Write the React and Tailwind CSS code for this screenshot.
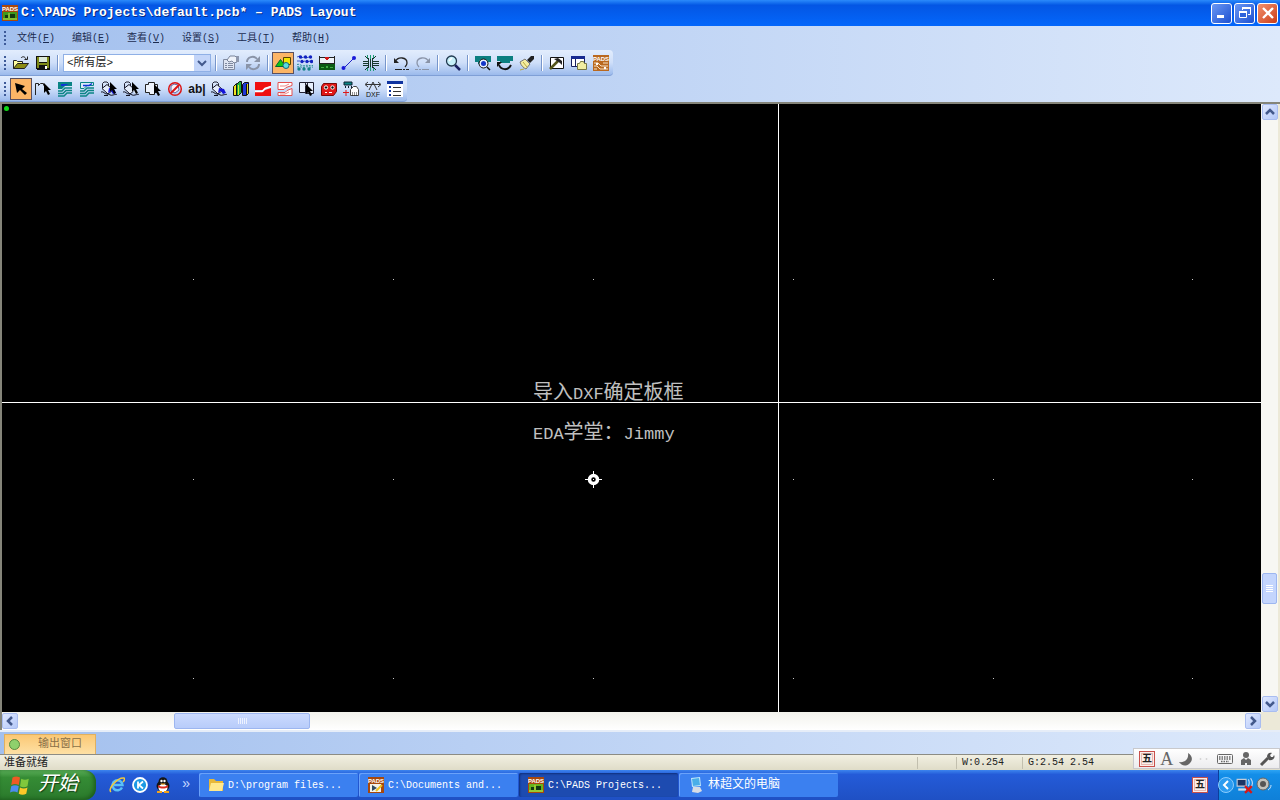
import React, { useState } from 'react';

const MENUS = [
  { label: '文件', key: 'F' },
  { label: '编辑', key: 'E' },
  { label: '查看', key: 'V' },
  { label: '设置', key: 'S' },
  { label: '工具', key: 'T' },
  { label: '帮助', key: 'H' },
];

const GRID_X = [191, 391, 591, 791, 991, 1190];
const GRID_Y = [175, 375, 574];

const Svg = ({ children, className = 'w-4 h-4', box = '0 0 16 16', crisp = false }) => (
  <svg viewBox={box} className={className} fill="none" shapeRendering={crisp ? 'crispEdges' : 'auto'} aria-hidden="true">
    {children}
  </svg>
);

const Pointer = ({ x, y }) => (
  <path d="M0 0V10L2 8L4 12L6 11L4 7H7Z" fill="#000" transform={`translate(${x} ${y})`} />
);

const Bucket = ({ fill }) => (
  <>
    <path d="M1.500 7V2.500L3 1h3l1.500 1.500V7" stroke="#223" />
    <path d="M1 7.500L6 3.500L12 9L7 13Z" fill="#e6eefc" stroke="#112" />
    <path d="M7 12l1-5 5 1 2 4-3 1-2-3z" fill={fill} />
    <path d="M0 11c3-1 3 2 6 2s3 2 6 1 3 0 4-1" stroke="#112" />
    <path d="M3 14.500h4" stroke="#112" />
  </>
);

const PadsLogo = ({ board = '#3f9a1c', className = 'w-4 h-4' }) => (
  <Svg className={className}>
    <rect width="16" height="16" fill="#a8480c" />
    <text x="8" y="6" fontSize="6" fontWeight="bold" textAnchor="middle" fill="#fff" fontFamily="Liberation Sans, sans-serif">PADS</text>
    <rect x="1" y="7" width="14" height="8" fill={board} />
    <path d="M3 10h3v3H3zM8 9h5v4H8z" fill="#123a10" />
    <path d="M1 14h14M7 8v5" stroke="#c8e04a" />
  </Svg>
);

const icons = {
  open: (
    <Svg>
      <path d="M.5 13.500V5.500h3l1 1h5v3" fill="#ffffa0" stroke="#222" />
      <path d="M.5 13.500L4.500 8.500H15.500L11.500 13.500Z" fill="#8c8c14" stroke="#222" />
      <path d="M8 3c1.500-2 4-1.500 5 1M14.500 1.500v3h-3" stroke="#222" />
    </Svg>
  ),
  save: (
    <Svg crisp>
      <path d="M1 1h14v14H2l-1-1z" fill="#111" />
      <path d="M2 2h2v6h8V2h2v11H2z" fill="#7f8a18" />
      <path d="M4 2h8v5H4z" fill="#dce8d8" />
      <path d="M4 10h8v4H4z" fill="#111" />
      <path d="M10 11h2v3h-2z" fill="#fff" />
    </Svg>
  ),
  properties: (
    <Svg>
      <path d="M.5 4.500h11v10H.5z" fill="#dfe5f2" stroke="#808aa0" />
      <path d="M2 8.500h2M5 8.500h5M2 10.500h2M5 10.500h5M2 12.500h2M5 12.500h5" stroke="#808aa0" />
      <path d="M4 5l3-4h5l2 2v4l-3 1-2-2-3 1z" fill="#eef2fa" stroke="#7b859b" />
      <path d="M13 1h3v6h-3z" fill="#8e98ae" />
    </Svg>
  ),
  refresh: (
    <Svg>
      <path d="M2 7c0-5 7-7 10-3M14 9c0 5-7 7-10 3" stroke="#8a94a8" strokeWidth="2" />
      <path d="M15 1v6H9zM1 15V9h6z" fill="#8a94a8" />
    </Svg>
  ),
  shapes: (
    <Svg>
      <path d="M0.500 11.500L5.500 4.500l5 7z" fill="#10c810" stroke="#063" />
      <path d="M8.500 2.500h7v7h-7z" fill="#f4e400" stroke="#554400" />
      <circle cx="11" cy="10.500" r="3" fill="#58dce0" stroke="#176b78" />
    </Svg>
  ),
  nets: (
    <Svg>
      <path d="M0 2l3-1M4 3l3-1M9 3l3-1M0 6l3 0M5 7l3-1M10 7l3-1" stroke="#3c55c8" />
      {[[3.5, 2], [8.5, 2], [13.5, 2], [5, 6.5], [10, 6.5], [14.500, 6.5]].map(([x, y]) => (
        <circle key={`${x}-${y}`} cx={x} cy={y} r="1.700" fill="#1120c0" />
      ))}
      <path d="M0 9.500c3-1 4 2 8 1s5 1 8 0M0 12c3-1 5 1 8 0s5 1 8 0" stroke="#2b8f95" strokeDasharray="2 1" />
      <circle cx="2" cy="14" r="1.700" fill="#158088" />
      <circle cx="7" cy="14" r="1.700" fill="#158088" />
      <circle cx="12" cy="14" r="1.700" fill="#158088" />
    </Svg>
  ),
  board: (
    <Svg crisp>
      <path d="M0 1h1v14H0zM15 1h1v14h-1zM1 2h14v7H1z" fill="#222" />
      <path d="M1 3h14v5H1z" fill="#eef2f8" />
      <path d="M6 2h4v2H9v1H7V4H6z" fill="#d01818" />
      <path d="M0 9h16v6H0z" fill="#0c5a14" />
      <path d="M2 12h3v1H2zM7 11h2v2H7zM11 12h3v1h-3z" fill="#3fae42" />
    </Svg>
  ),
  route: (
    <Svg>
      <path d="M3 13L13 3" stroke="#2222c8" />
      <circle cx="2.500" cy="13" r="2" fill="#1818d8" />
      <circle cx="13" cy="3" r="2" fill="#1818d8" />
    </Svg>
  ),
  fanout: (
    <Svg>
      <path d="M7.500 4v8M5 4L2 1M5 6.500H0M5 8.500H0M5 10.500H0M5 12L2 15M10 4l3-3M10 6.500h6M10 8.500h6M10 10.500h6M10 12l3 3" stroke="#17372c" />
      <path d="M5 3h1v10H5zM9 3h1v10H9z" fill="#17372c" />
      <path d="M7.500 0v4M7.500 12v4" stroke="#1d9c74" />
      <path d="M4.500 0v3M10.500 0v3M4.500 13v3M10.500 13v3" stroke="#1d9c74" />
    </Svg>
  ),
  undo: (
    <Svg>
      <path d="M2 7c3-6 12-5 12 1 0 2-1 3-2 4" stroke="#222" strokeWidth="1.300" />
      <path d="M1 3v5h5z" fill="#222" />
      <path d="M2 14.500h7M10 14.500h2M13 14.500h3" stroke="#222" />
    </Svg>
  ),
  redo: (
    <Svg>
      <path d="M14 7C11 1 2 2 2 8c0 2 1 3 2 4" stroke="#8a94a8" strokeWidth="1.300" />
      <path d="M15 3v5h-5z" fill="#8a94a8" />
      <path d="M0 14.500h3M4 14.500h2M7 14.500h7" stroke="#8a94a8" />
    </Svg>
  ),
  zoom: (
    <Svg>
      <path d="M10 10l5 5" stroke="#182060" strokeWidth="2.500" />
      <circle cx="6.500" cy="6" r="5" fill="#c6f0fa" stroke="#223a50" strokeWidth="1.300" />
      <path d="M4 6l3-3" stroke="#fff" strokeWidth="1.500" />
    </Svg>
  ),
  boardZoom: (
    <Svg>
      <path d="M0 1h16v6h-3v2H3V7H0z" fill="#0b7f80" />
      <circle cx="8.500" cy="8.500" r="4.500" fill="#e8f0ff" stroke="#111" />
      <circle cx="8.500" cy="8.500" r="2.500" fill="#1436c8" />
      <path d="M12 12l3 3" stroke="#111" strokeWidth="1.500" />
    </Svg>
  ),
  boardRedraw: (
    <Svg>
      <path d="M0 1h16v5h-3v2H3V6H0z" fill="#0b7f80" />
      <path d="M2 10c2 5 9 6 12 0" stroke="#111" strokeWidth="2" />
      <path d="M0 12V7h5z" fill="#111" />
    </Svg>
  ),
  brush: (
    <Svg>
      <path d="M1 7l5-3 5 5-4 5c-2-1-5-3-6-7z" fill="#f4eda0" stroke="#777" />
      <path d="M8 5l4-4h3v3l-4 4z" fill="#222" />
      <path d="M4 7l4 5M1 15l4-1" stroke="#b8a840" />
    </Svg>
  ),
  tools: (
    <Svg>
      <path d="M1.500 2.500h13v11h-13z" fill="#fff" stroke="#111" />
      <path d="M1 14L9 6" stroke="#55551a" strokeWidth="2.500" />
      <path d="M5 4l4-1 4 3v4l-2-2-3-2z" fill="#222" />
    </Svg>
  ),
  explorer: (
    <Svg>
      <path d="M.5 1.500h13v10H.5z" fill="#fff" stroke="#182060" />
      <path d="M0 1h14v3H0z" fill="#182a90" />
      <path d="M4.500 4v8" stroke="#182060" />
      <path d="M6.500 8.500h2l1-2h3l1 2h2v6h-9z" fill="#f1eda2" stroke="#777744" />
    </Svg>
  ),
  router: (
    <Svg>
      <rect width="16" height="16" fill="#b9681f" />
      <text x="8" y="6" fontSize="6" fontWeight="bold" textAnchor="middle" fill="#fff" fontFamily="Liberation Sans, sans-serif">PADS</text>
      <path d="M1 8h4l3 3h7M1 11h3l3 3h8M10 8h5M1 14h3" stroke="#f5e2c8" />
      <circle cx="4" cy="9" r="1.200" fill="#fff" />
      <circle cx="12" cy="13" r="1.200" fill="#fff" />
    </Svg>
  ),
  select: (
    <Svg>
      <path d="M2 2L4 12L7 9L12 14L14 12L9 8L12 5Z" fill="#000" />
    </Svg>
  ),
  draft: (
    <Svg>
      <path d="M.5 14V2.500h3v2l2-2h3v2" stroke="#222" />
      <Pointer x={9} y={2} />
    </Svg>
  ),
  copper: (
    <Svg>
      <path d="M1 1h14v4H8L5 8H1z" fill="#0b8485" />
      <path d="M4 3h8L7 5H4z" fill="#1234d8" />
      <path d="M1 10h4l3-3h7M1 12.500h5l3-3h6M1 15h6l3-3h5" stroke="#0b8485" strokeWidth="1.500" />
    </Svg>
  ),
  copperCut: (
    <Svg>
      <path d="M1.500 1.500h13v3H8L5 7.500H1.500z" fill="#dbeaf8" stroke="#0b8485" />
      <path d="M4 4.500h6l3-2" stroke="#1234d8" strokeWidth="1.500" />
      <path d="M1 10h4l3-3h7M1 12.500h5l3-3h6M1 15h6l3-3h5" stroke="#0b8485" strokeWidth="1.500" />
    </Svg>
  ),
  pour: <Svg><Bucket fill="#1414d8" /><Pointer x={9} y={1} /></Svg>,
  pourCut: <Svg><Bucket fill="#dfe8f8" /><Pointer x={9} y={1} /></Svg>,
  outline: (
    <Svg>
      <path d="M.5 3.500h3v-2h6v2h3v8h-3v2h-5v-2h-4z" fill="#eef3fc" stroke="#222" />
      <Pointer x={9} y={3} />
    </Svg>
  ),
  keepout: (
    <Svg>
      <path d="M4 5l3-2 4 1 1 5-4 3-4-2z" fill="#f6f2f8" stroke="#6666a0" />
      <circle cx="8" cy="8" r="6.300" stroke="#dc1515" strokeWidth="1.500" />
      <path d="M4 12l8-8" stroke="#dc1515" strokeWidth="2" />
    </Svg>
  ),
  text: <span className="font-['Liberation_Sans'] text-xs font-bold leading-4 text-[#111]">ab|</span>,
  flood: <Svg><Bucket fill="#1414d8" /></Svg>,
  library: (
    <Svg>
      <path d="M.5 5.500l3-3v12h-3z" fill="#f0e020" stroke="#111" />
      <path d="M3.500 3.500l3-3h2v11l-3 3h-2z" fill="#1bb03a" stroke="#111" />
      <path d="M5.500 4v10" stroke="#d8e830" />
      <path d="M9.500 3.500l2-2h4v11l-2 2h-4z" fill="#2038d8" stroke="#111" />
      <path d="M13 3h1v11h-1z" fill="#111" />
      <path d="M14.500 3v10" stroke="#e8d820" />
    </Svg>
  ),
  plane: (
    <Svg>
      <path d="M0 1h16v4L10 7l-2 2H0z" fill="#f01010" />
      <path d="M0 11h8l2-2 6-2v8H0z" fill="#f01010" />
      <path d="M0 10.500h7l3-3 6-2" stroke="#fff" strokeWidth="1.500" />
    </Svg>
  ),
  planeCut: (
    <Svg>
      <path d="M1 1.500h14v3L9 6.500l-2 2H1zM1 14.500v-3h7l2-2 5-2v7z" fill="#fff" stroke="#e25050" />
      <path d="M3 5h5l4-2M3 13h5l4-2" stroke="#ee8888" />
    </Svg>
  ),
  duplicate: (
    <Svg>
      <path d="M.5 1.500h8v10h-8zM6.500 4.500v-3h8v11h-8z" fill="#e7effc" stroke="#223" />
      <Pointer x={7} y={3} />
    </Svg>
  ),
  component: (
    <Svg>
      <path d="M2.500 2.500h13v8l-3 4h-12v-9z" fill="#e01818" stroke="#7b0808" />
      <circle cx="5" cy="6.500" r="1.700" fill="#111" stroke="#fff" />
      <circle cx="11.500" cy="6.500" r="1.700" fill="#111" stroke="#fff" />
      <path d="M4 11.500h2M8 11.500h3" stroke="#fff" />
    </Svg>
  ),
  jumper: (
    <Svg>
      <path d="M1 1h8v3H1z" fill="#0b8485" stroke="#123" />
      <path d="M2 6h1M5 6h1M8 6h1" stroke="#123" strokeWidth="2" />
      <path d="M7.500 14.500v-6l3-3h3l2 3v6z" fill="#fff" stroke="#444" />
      <path d="M9 12h5M9 14h5" stroke="#222" strokeDasharray="1 1" />
      <path d="M0 11.500h6M3 9v6" stroke="#dc1818" />
    </Svg>
  ),
  dxf: (
    <Svg>
      <path d="M1 3.500h14M4 9l4-8 4 8M3 1L0 3.500 3 6M13 1l3 2.500L13 6" stroke="#333" />
      <text x="8" y="15.500" fontSize="7" textAnchor="middle" fill="#111" fontFamily="Liberation Sans, sans-serif">DXF</text>
    </Svg>
  ),
  list: (
    <Svg crisp>
      <path d="M0 0h16v16H0z" fill="#fff" />
      <path d="M0 0h16v3H0z" fill="#1034a0" />
      <path d="M2 5h2v2H2zM2 9h2v2H2zM2 13h2v2H2z" fill="#1034a0" />
      <path d="M6 6h8v1H6zM6 10h8v1H6zM6 14h8v1H6z" fill="#333" />
    </Svg>
  ),
};

const Tool = ({ name, title, active }) => (
  <button
    type="button"
    aria-label={title}
    className={`flex h-[22px] w-[22px] shrink-0 items-center justify-center ${active ? 'border border-[#5a5060] bg-[#fcb566]' : 'hover:bg-[#ffe0a8]'}`}
  >
    {icons[name]}
  </button>
);

const Sep = () => (
  <span className="flex w-2 shrink-0 justify-center">
    <span className="h-4 w-px bg-[#7796cb]" />
    <span className="h-4 w-px bg-white" />
  </span>
);

const Grip = () => (
  <span className="flex w-[10px] shrink-0 flex-col items-center gap-[2px]">
    {[0, 1, 2, 3].map(i => <span key={i} className="h-[2px] w-[2px] bg-[#3d5a98]" />)}
  </span>
);

const ToolStrip = ({ children }) => (
  <div className="flex h-[26px] w-fit items-center rounded-r border-b border-[#7f9fd6] bg-linear-to-b from-[#e2edfd] via-[#cfdff9] to-[#9bbaec] pr-px">
    <Grip />
    {children}
  </div>
);

const ARROWS = { up: 'M4 10l4-4 4 4', down: 'M4 6l4 4 4-4', left: 'M10 4L6 8l4 4', right: 'M6 4l4 4-4 4' };

const ScrollButton = ({ dir }) => (
  <button type="button" aria-label={`Scroll ${dir}`} className="flex h-4 w-4 shrink-0 items-center justify-center rounded-xs border border-[#a9bdf0] bg-linear-to-br from-[#dfe8ff] to-[#b4c8f8]">
    <Svg className="w-4 h-4 shrink-0"><path d={ARROWS[dir]} stroke="#43598c" strokeWidth="2.500" /></Svg>
  </button>
);

const WindowButton = ({ title, className, children }) => (
  <button type="button" aria-label={title} className={`flex h-[21px] w-[21px] items-center justify-center rounded-[3px] border border-white ${className}`}>
    <Svg>{children}</Svg>
  </button>
);

const TaskButton = ({ icon, active, wide, children }) => (
  <button
    type="button"
    className={`flex h-6 w-[159px] min-w-0 items-center gap-1 rounded-xs pl-[9px] text-left text-white ${wide ? 'text-xs' : 'text-[10px]'} ${active ? 'bg-[#1d4bb0] shadow-[inset_1px_1px_2px_#10307c]' : 'bg-[#3b80f0] shadow-[inset_1px_1px_0_#6aa2fa]'}`}
  >
    {icon}
    <span className="truncate">{children}</span>
  </button>
);

const FiveStroke = ({ className = '' }) => (
  <span className={`flex h-4 w-4 items-center justify-center border border-[#c8504c] bg-[#fbeeea] ${className}`}>
    <span className="flex h-3 w-3 items-center justify-center border border-[#e6b8b2] pt-[2px] text-[10px] font-bold leading-none text-[#222]">五</span>
  </span>
);

const TitleBar = () => (
  <header className="flex h-[26px] items-center gap-[3px] bg-linear-to-b from-[#2b8afb] via-[#0456e4] via-20% to-[#0467fb] pl-[2px] pr-[2px]">
    <PadsLogo />
    <h1 className="flex-1 truncate text-[13px] font-bold text-white [text-shadow:1px_1px_0_#0a2a80]">C:\PADS Projects\default.pcb* – PADS Layout</h1>
    <div className="flex gap-[2px]">
      <WindowButton title="最小化" className="bg-linear-to-br from-[#6a97f4] to-[#1d4fd0]">
        <path d="M3 10h7v3H3z" fill="#fff" />
      </WindowButton>
      <WindowButton title="还原" className="bg-linear-to-br from-[#6a97f4] to-[#1d4fd0]">
        <path d="M5.500 5V2.500h8v7H11" stroke="#fff" />
        <path d="M5 3h9" stroke="#fff" strokeWidth="2" />
        <path d="M2.500 6.500h7v6h-7z" fill="#2d62dc" stroke="#fff" />
        <path d="M2 7h8" stroke="#fff" strokeWidth="2" />
      </WindowButton>
      <WindowButton title="关闭" className="bg-linear-to-br from-[#f0906c] to-[#cc3a10]">
        <path d="M3 3l10 10M13 3L3 13" stroke="#fff" strokeWidth="2.300" />
      </WindowButton>
    </div>
  </header>
);

const MenuBar = () => (
  <nav className="flex h-6 items-center">
    <Grip />
    <div className="flex gap-[3px]">
      {MENUS.map(m => (
        <button key={m.key} type="button" className="w-[52px] text-[10px] text-[#1c2c50]">
          {m.label}(<u>{m.key}</u>)
        </button>
      ))}
    </div>
  </nav>
);

const Toolbars = () => {
  const [layer, setLayer] = useState('all');
  return (
    <div className="flex flex-col">
      <ToolStrip>
        <Tool name="open" title="打开" />
        <Tool name="save" title="保存" />
        <Sep />
        <div className="relative flex w-[150px] items-center px-px">
          <select
            aria-label="层"
            value={layer}
            onChange={e => setLayer(e.target.value)}
            className="h-[18px] w-full appearance-none border border-[#8fb0e6] bg-white pl-[3px] text-[11px] leading-4 text-[#222]"
          >
            <option value="all">&lt;所有层&gt;</option>
          </select>
          <span className="pointer-events-none absolute right-[2px] flex h-4 w-4 items-center justify-center bg-[#c3d5f9]">
            <Svg><path d={ARROWS.down} stroke="#43598c" strokeWidth="2" /></Svg>
          </span>
        </div>
        <Sep />
        <Tool name="properties" title="特性" />
        <Tool name="refresh" title="循环" />
        <Sep />
        <Tool name="shapes" title="绘图工具栏" active />
        <Tool name="nets" title="设计工具栏" />
        <Tool name="board" title="尺寸标注" />
        <Tool name="route" title="布线" />
        <Tool name="fanout" title="扇出" />
        <Sep />
        <Tool name="undo" title="撤销" />
        <Tool name="redo" title="重做" />
        <Sep />
        <Tool name="zoom" title="缩放" />
        <Sep />
        <Tool name="boardZoom" title="板" />
        <Tool name="boardRedraw" title="前一视图" />
        <Tool name="brush" title="重画" />
        <Sep />
        <Tool name="tools" title="输出窗口" />
        <Tool name="explorer" title="项目浏览器" />
        <Tool name="router" title="布线器" />
      </ToolStrip>
      <ToolStrip>
        <Tool name="select" title="选择" active />
        <Tool name="draft" title="绘图" />
        <Tool name="copper" title="铜箔" />
        <Tool name="copperCut" title="铜箔挖空" />
        <Tool name="pour" title="覆铜" />
        <Tool name="pourCut" title="覆铜挖空" />
        <Tool name="outline" title="板框" />
        <Tool name="keepout" title="禁止区" />
        <Tool name="text" title="文本" />
        <Tool name="flood" title="灌注" />
        <Tool name="library" title="库" />
        <Tool name="plane" title="平面区域" />
        <Tool name="planeCut" title="平面挖空" />
        <Tool name="duplicate" title="复制" />
        <Tool name="component" title="元件" />
        <Tool name="jumper" title="标签" />
        <Tool name="dxf" title="导入 DXF" />
        <Tool name="list" title="选项" />
      </ToolStrip>
    </div>
  );
};

const BoardCanvas = () => (
  <main className="relative min-w-0 flex-1 overflow-hidden bg-black">
    <span className="absolute left-[2px] top-[2px] h-[5px] w-[5px] rounded-full bg-[#10d818]" />
    {GRID_Y.map(y => GRID_X.map(x => (
      <span key={`${x}-${y}`} className="absolute h-px w-px bg-[#c8c8c8]" style={{ left: x, top: y }} />
    )))}
    {/* cursor cross */}
    <span className="absolute inset-y-0 left-[776px] w-px bg-white" />
    <span className="absolute inset-x-0 top-[298px] h-px bg-white" />
    {/* board origin */}
    <span className="absolute left-[583px] top-[367px]">
      <Svg className="h-[17px] w-[17px]" box="0 0 17 17">
        <path d="M8.500 0v17M0 8.500h17" stroke="#fff" />
        <circle cx="8.500" cy="8.500" r="4" fill="#000" stroke="#fff" strokeWidth="3.500" />
        <path d="M8 8h1v1H8z" fill="#fff" />
      </Svg>
    </span>
    <p className="absolute left-[531px] top-[278px] whitespace-nowrap text-xl leading-6 text-[#c0c0c0]">
      导入<span className="text-[17px]">DXF</span>确定板框
    </p>
    <p className="absolute left-[531px] top-[318px] whitespace-nowrap text-xl leading-6 text-[#c0c0c0]">
      <span className="text-[17px]">EDA</span>学堂：<span className="text-[17px]">Jimmy</span>
    </p>
  </main>
);

const Workspace = () => (
  <section className="flex min-h-0 flex-1 flex-col border-l-2 border-t-2 border-[#85857a] bg-[#ece9d8] pr-[2px]">
    <div className="flex min-h-0 flex-1">
      <BoardCanvas />
      <div className="flex w-[17px] flex-col items-center bg-[#f7f7f3]">
        <ScrollButton dir="up" />
        <div className="flex-[453]" />
        <div className="flex h-[31px] w-[15px] flex-col items-center justify-center gap-px rounded-xs border border-[#9db6f0] bg-[#c4d5fd]">
          {[0, 1, 2, 3].map(i => <span key={i} className="h-px w-[7px] bg-white" />)}
        </div>
        <div className="flex-[92]" />
        <ScrollButton dir="down" />
      </div>
    </div>
    <div className="flex h-[18px]">
      <div className="flex flex-1 items-center bg-linear-to-b from-[#f2f2ec] to-white">
        <ScrollButton dir="left" />
        <div className="flex-[156]" />
        <div className="flex h-4 w-[136px] items-center justify-center gap-px rounded-xs border border-[#9db6f0] bg-linear-to-b from-[#cbdafe] to-[#b8ccfa]">
          {[0, 1, 2, 3, 4].map(i => <span key={i} className="h-[6px] w-px bg-[#edf2ff]" />)}
        </div>
        <div className="flex-[934]" />
        <ScrollButton dir="right" />
      </div>
      <div className="w-[17px] bg-[#ece9d8]" />
    </div>
  </section>
);

const StatusBar = () => (
  <footer className="flex h-4 items-center border-t border-[#8c8c84] bg-linear-to-b from-[#f2f0e2] to-[#dfdcc8] text-[10px] text-[#222]">
    <span className="flex-1 pl-1 text-[11px] leading-4">准备就绪</span>
    <span className="h-3 w-[39px] border-l border-[#c2bfae]" />
    <span className="w-[66px] border-l border-[#c2bfae] pl-[5px] leading-3">W:0.254</span>
    <span className="w-[258px] border-l border-[#c2bfae] pl-[5px] leading-3">G:2.54 2.54</span>
  </footer>
);

const ImeBar = () => (
  <div className="absolute bottom-[31px] right-0 flex h-[21px] w-[147px] items-center justify-between border border-[#c9c9cc] bg-linear-to-b from-white to-[#ececee] pl-[5px] pr-1 text-[#666]">
    <FiveStroke />
    <span className="font-['Liberation_Serif'] text-lg leading-none">A</span>
    <Svg><path d="M10 2c5 3 5 8 1 11s-8 1-10-2c6 1 10-3 9-9z" fill="#666" /></Svg>
    <Svg className="h-4 w-3"><path d="M1 8h2M9 8h2" stroke="#ccc" strokeWidth="2" /></Svg>
    <Svg>
      <rect x="0.500" y="3.500" width="15" height="9" rx="1" stroke="#666" />
      <path d="M2 6h12M2 8h12M4 10.500h8" stroke="#666" strokeWidth="1.500" strokeDasharray="1.500 1" />
    </Svg>
    <Svg>
      <circle cx="8" cy="4" r="3" fill="#666" />
      <path d="M3 14V9l3-2 2 2 2-2 3 2v5h-4v-2H7v2z" fill="#666" />
    </Svg>
    <Svg>
      <path d="M2 14l7-7" stroke="#555" strokeWidth="3" />
      <path d="M8 6c0-3 2-5 5-4l-2 2 1 2h2l1-2c2 3-2 6-5 5z" fill="#555" />
    </Svg>
  </div>
);

const Taskbar = () => (
  <footer className="flex h-[30px] items-center bg-linear-to-b from-[#3d84ee] via-[#245bd8] via-15% to-[#1f50c4]">
    <button type="button" className="flex h-full w-24 items-center gap-2 rounded-r-xl bg-linear-to-b from-[#5cb05a] via-[#358c35] via-25% to-[#2b7a2c] pl-[10px] text-xl italic leading-none text-white shadow-[inset_-2px_-1px_4px_#1c5c1c] [text-shadow:1px_1px_1px_#153f15]">
      <Svg className="h-5 w-5">
        <path d="M2 2c2-1 4-1 6 0L7 8c-2-1-4-1-6 0z" fill="#ee5a24" />
        <path d="M9 3c2 1 4 1 6 0l-1 6c-2 1-4 1-6 0z" fill="#80c83c" />
        <path d="M1 9c2-1 4-1 6 0l-1 5c-2-1-4-1-6 0z" fill="#4d8cf0" />
        <path d="M8 10c2 1 4 1 6 0l-1 5c-2 1-4 1-6 0z" fill="#fcc828" />
      </Svg>
      开始
    </button>
    <div className="flex w-[103px] items-center gap-[7px] pl-[13px]">
      <Svg>
        <path d="M13 10.500A5 5 0 1 1 13.500 8H5" stroke="#5ac0f8" strokeWidth="2.500" />
        <path d="M2 15C-2 12 9 0 15 1c1 1 0 3-1 4" stroke="#f2c83c" strokeWidth="1.500" />
      </Svg>
      <Svg>
        <circle cx="8" cy="8" r="7" fill="#1c9ae4" stroke="#fff" strokeWidth="1.800" />
        <path d="M6 4.500v7M11 4.500L7 8l4 3.500" stroke="#fff" strokeWidth="1.800" />
      </Svg>
      <Svg>
        <ellipse cx="8" cy="9" rx="6.500" ry="5.500" fill="#151515" />
        <ellipse cx="8" cy="5" rx="4.500" ry="4.800" fill="#151515" />
        <ellipse cx="8" cy="11" rx="4.500" ry="4" fill="#fff" />
        <path d="M3 8c3 2 7 2 10 0v2c-3 2-7 2-10 0z" fill="#dd2a1c" />
        <circle cx="6.500" cy="4" r="1.200" fill="#fff" />
        <circle cx="9.500" cy="4" r="1.200" fill="#fff" />
        <path d="M5 6.500h6l-3 1.500zM2 14h5v2H2zM9 14h5v2H9z" fill="#f4a41c" />
      </Svg>
      <span className="self-start pl-1 text-sm leading-none text-[#c4d8ff]">»</span>
    </div>
    <div className="flex min-w-0 flex-1 gap-px">
      <TaskButton
        icon={
          <Svg className="h-4 w-4 shrink-0">
            <path d="M1 2h5l2 2h7v10H1z" fill="#e8b838" />
            <path d="M1 14L3 6h13l-2 8z" fill="#ffe88c" />
          </Svg>
        }
      >
        D:\program files...
      </TaskButton>
      <TaskButton
        icon={
          <Svg className="h-4 w-4 shrink-0">
            <rect width="16" height="16" fill="#a8480c" />
            <text x="8" y="6" fontSize="6" fontWeight="bold" textAnchor="middle" fill="#fff" fontFamily="Liberation Sans, sans-serif">PADS</text>
            <path d="M2 7h11v8H2z" fill="#f2f2ea" />
            <path d="M4 8l5 3-5 3z" fill="#334a60" />
            <path d="M8 14l6-6" stroke="#f0c020" strokeWidth="2" />
          </Svg>
        }
      >
        C:\Documents and...
      </TaskButton>
      <TaskButton active icon={<PadsLogo board="#68b41c" className="h-4 w-4 shrink-0" />}>C:\PADS Projects...</TaskButton>
      <TaskButton
        wide
        icon={
          <Svg className="h-4 w-4 shrink-0">
            <path d="M3 1l9-1 1 9-9 1z" fill="#bfe6fa" />
            <path d="M4 2l7-1 1 7-7 1z" fill="#4aaee8" />
            <path d="M5 10h7l2 4-4 2-6-1z" fill="#d8dce4" />
          </Svg>
        }
      >
        林超文的电脑
      </TaskButton>
    </div>
    <FiveStroke className="mr-[10px]" />
    <div className="flex h-full w-[62px] items-center gap-[2px] bg-linear-to-b from-[#2ca4f4] via-[#138ee8] via-15% to-[#0f80d8] shadow-[inset_1px_0_0_#0c3f9c]">
      <Svg>
        <circle cx="8" cy="8" r="7.500" fill="#2c9cf0" stroke="#8cccfc" />
        <path d="M10 4L6 8l4 4" stroke="#fff" strokeWidth="2" />
      </Svg>
      <Svg className="h-[18px] w-[18px]">
        <path d="M1 3h8v6H1z" fill="#1c3564" stroke="#c5ccd8" />
        <path d="M2 12h7" stroke="#d8dce4" strokeWidth="2" />
        <path d="M11 3c1 2 1 4 0 6M13 2c2 3 2 6 0 8" stroke="#c8dcf4" />
        <path d="M8 9l6 6M14 9l-6 6" stroke="#d81818" strokeWidth="2" />
      </Svg>
      <Svg>
        <circle cx="7" cy="7" r="6" fill="#c2c2bc" stroke="#666" />
        <circle cx="7" cy="7" r="3" fill="#555" />
        <path d="M12 13c2-1 3-3 3-5" stroke="#c8e4fc" />
      </Svg>
    </div>
  </footer>
);

export default function App() {
  return (
    <div className="relative flex h-screen flex-col overflow-hidden bg-linear-to-r from-[#a3c0ee] to-[#dde9fb] font-['Liberation_Mono','Noto_Sans_CJK_SC',monospace]">
      <TitleBar />
      <MenuBar />
      <Toolbars />
      <Workspace />
      <div className="flex h-6 items-end border-t-2 border-[#e6edf8] pl-1">
        <button type="button" className="flex h-5 w-[92px] items-center gap-[18px] border border-b-0 border-[#e0b060] bg-linear-to-b from-[#fbc874] to-[#fde0a4] pl-1 text-[11px] text-[#8a7048]">
          <span className="h-[11px] w-[11px] rounded-full border border-[#5a8a40] bg-[#8fd06c]" />
          输出窗口
        </button>
      </div>
      <StatusBar />
      <Taskbar />
      <ImeBar />
    </div>
  );
}
